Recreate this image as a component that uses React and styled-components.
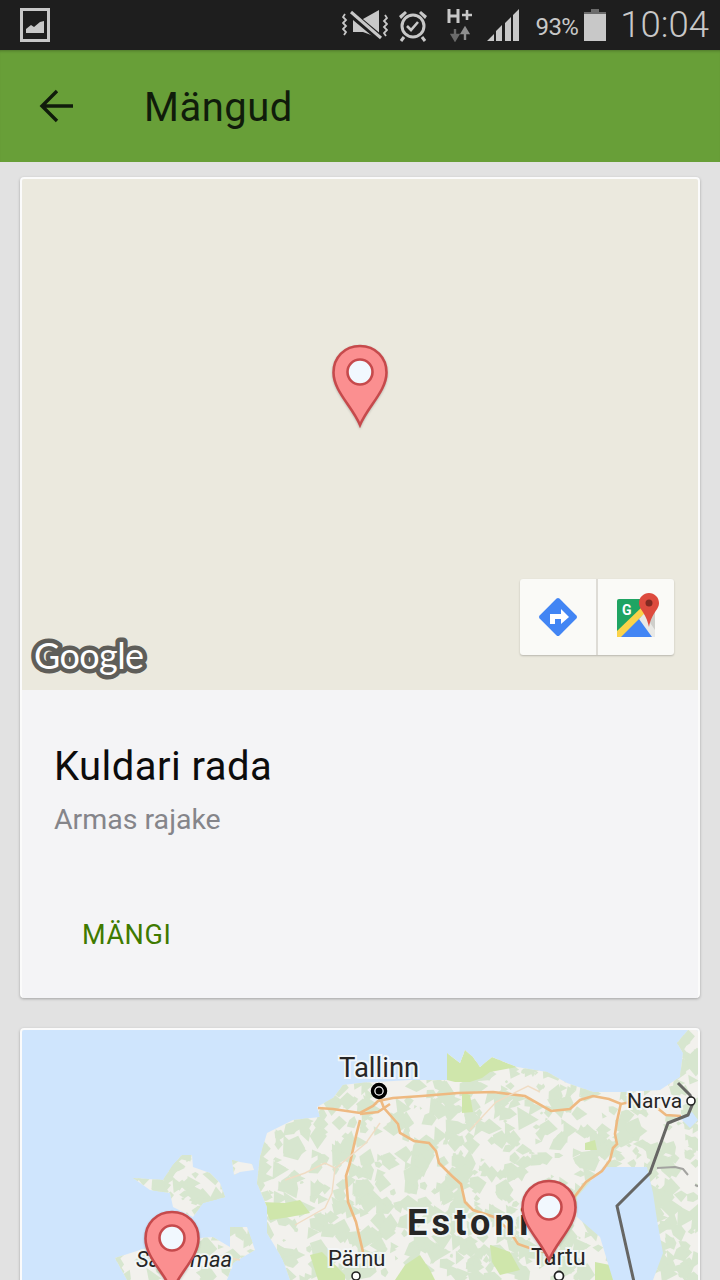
import styled, { createGlobalStyle } from "styled-components";
import { useMemo } from "react";

const GlobalStyle = createGlobalStyle`
  html, body {
    margin: 0;
    padding: 0;
    height: 1280px;
    overflow: hidden;
    background: #e2e2e2;
    font-family: Roboto, "Noto Sans", sans-serif;
  }
`;

const Page = styled.div`
  width: 720px;
  height: 1280px;
  overflow: hidden;
  background: #e2e2e2;
`;

const StatusBar = styled.div`
  height: 50px;
  background: #1e1e1e;
  display: flex;
  align-items: center;
  padding: 0 11px 0 20px;
  color: #c8c8c8;
`;

const StatusRight = styled.div`
  margin-left: auto;
  display: flex;
  align-items: center;
`;

const Spacer = styled.span`
  width: ${(p) => p.$w}px;
`;

const Battery = styled.span`
  font-size: 24px;
  letter-spacing: -0.6px;
  margin: 3px 6px 0 16px;
`;

const Clock = styled.span`
  font-size: 36.5px;
  font-weight: 300;
  margin-left: 14px;
  line-height: 50px;
`;

const Header = styled.header`
  height: 112px;
  background: #689f38;
  display: flex;
  align-items: center;
  padding-left: 38px;
  box-shadow: inset 0 3px 3px -2px rgba(0, 0, 0, 0.25);
`;

const Title = styled.h1`
  margin: 3px 0 0 68px;
  font-size: 40px;
  font-weight: 400;
  letter-spacing: 0.5px;
  color: #101c0b;
`;

const Feed = styled.main`
  display: flex;
  flex-direction: column;
  gap: 30px;
  padding: 15px 20px 0;
`;

const Card = styled.section`
  background: #f4f4f6;
  border: 2px solid #fbfbfb;
  border-bottom: 0;
  border-radius: 4px;
  box-shadow: 0 1px 3px rgba(0, 0, 0, 0.28);
  overflow: hidden;
  flex: none;
`;

const MapArea = styled.div`
  position: relative;
  height: 511px;
  background: ${(p) => p.$bg};
`;

const SecondMap = styled(MapArea)`
  height: 260px;
`;

const PinSpot = styled.svg`
  position: absolute;
  left: ${(p) => p.$x}px;
  top: ${(p) => p.$y}px;
  filter: drop-shadow(0 1px 1px rgba(0, 0, 0, 0.2));
`;

const MapButtons = styled.div`
  position: absolute;
  right: 24px;
  bottom: 35px;
  display: flex;
  height: 76px;
  background: #fafaf7;
  border-radius: 3px;
  box-shadow: 0 1px 2px rgba(0, 0, 0, 0.22);
`;

const MapButton = styled.div`
  width: 76px;
  display: flex;
  align-items: center;
  justify-content: center;
  & + & {
    width: 78px;
    padding-left: 6px;
    box-sizing: border-box;
    border-left: 2px solid #dedcd6;
  }
`;

const GoogleMark = styled.svg`
  position: absolute;
  left: 2px;
  bottom: 2px;
`;

const CardBody = styled.div`
  padding: 55px 0 37px 33px;
`;

const CardTitle = styled.h2`
  margin: 0 0 0 -1px;
  font-size: 40px;
  font-weight: 400;
  letter-spacing: 0.45px;
  line-height: 44px;
  color: #0c0c0c;
`;

const CardSub = styled.p`
  margin: 13px 0 0 -1px;
  font-size: 28.5px;
  line-height: 36px;
  color: #85858a;
`;

const PlayButton = styled.button`
  display: block;
  margin: 71px 0 0;
  padding: 0 0 0 27px;
  height: 52px;
  border: 0;
  background: none;
  font-family: inherit;
  font-size: 27px;
  letter-spacing: 0.6px;
  color: #3f7a00;
`;

const MapText = styled.text`
  font-family: Roboto, sans-serif;
  font-size: ${(p) => p.$size}px;
  font-weight: ${(p) => p.$weight || 400};
  font-style: ${(p) => (p.$italic ? "italic" : "normal")};
  letter-spacing: ${(p) => p.$spacing || 0}px;
  fill: #262626;
  stroke: rgba(245, 248, 250, 0.85);
  stroke-width: 4px;
  paint-order: stroke;
`;

const LogoText = styled.text`
  font-family: Lato, "Open Sans", sans-serif;
  font-size: 36px;
  font-weight: 400;
  letter-spacing: -0.6px;
  fill: #fff;
  stroke: #5f5e59;
  stroke-width: 9px;
  stroke-linejoin: round;
  paint-order: stroke;
`;

function Pin({ x, y }) {
  return (
    <PinSpot $x={x} $y={y} width="58" height="84" viewBox="0 0 58 84">
      <path
        d="M29 2C13.5 2 2.5 13.5 2.5 28.5 2.500 47 21 62 29 81 37 62 55.500 47 55.500 28.500 55.500 13.500 44.500 2 29 2Z"
        fill="#fb8f90"
        stroke="#c64a4c"
        strokeWidth="2.6"
      />
      <circle cx="29" cy="28" r="12.5" fill="#f1f8fe" stroke="#c64a4c" strokeWidth="2.6" />
    </PinSpot>
  );
}

function ImageNote() {
  return (
    <svg width="30" height="34" viewBox="0 0 30 34">
      <rect x="1.5" y="1.5" width="27" height="31" fill="none" stroke="#c8c8c8" strokeWidth="3" />
      <path d="M6 25v-4l5-4 3 2 6-5 4-1v12z" fill="#c8c8c8" />
    </svg>
  );
}

function VibrateMute() {
  return (
    <svg width="46" height="34" viewBox="0 0 46 34">
      <g fill="none" stroke="#c8c8c8" strokeWidth="1.8">
        <path d="M3 6l-2 3 3 3-3 3 3 3-3 3 3 3-2 3" />
        <path d="M43 7l2 3-3 3 3 3-3 3 3 3-3 3 2 3" />
      </g>
      <path d="M11 11h10l16-9v28L21 24H11z" fill="#c8c8c8" />
      <path d="M7 4l31 26" stroke="#1e1e1e" strokeWidth="7" />
      <path d="M9 4l30 26" stroke="#c8c8c8" strokeWidth="3" />
    </svg>
  );
}

function Alarm() {
  return (
    <svg width="30" height="34" viewBox="0 0 30 34">
      <circle cx="15" cy="18" r="11" fill="none" stroke="#c8c8c8" strokeWidth="3" />
      <path d="M9 18l4 4 7-8" fill="none" stroke="#c8c8c8" strokeWidth="2.6" />
      <path d="M1 8l6-5 2 2-6 6zM29 8l-6-5-2 2 6 6z" fill="#c8c8c8" />
      <path d="M6 29l-3 4M24 29l3 4" stroke="#c8c8c8" strokeWidth="3" />
    </svg>
  );
}

function NetworkType() {
  return (
    <svg width="26" height="34" viewBox="0 0 26 34">
      <path d="M2 1v14M11 1v14M2 8h9" stroke="#c8c8c8" strokeWidth="3" fill="none" />
      <path d="M15 7h10M20 2v10" stroke="#c8c8c8" strokeWidth="2.6" fill="none" />
      <path d="M8 21v9M5 27l3 5 3-5z" stroke="#6a6a6a" strokeWidth="2.4" fill="#6a6a6a" />
      <path d="M18 32v-10M15 25l3-5 3 5z" stroke="#8f8f8f" strokeWidth="2.4" fill="#8f8f8f" />
    </svg>
  );
}

function Signal() {
  return (
    <svg width="34" height="34" viewBox="0 0 34 34">
      <path d="M1 33l7-7v7zM10 33V23l6-6v16zM19 33V15l6-6v24zM27 33V7l6-6v32z" fill="#c8c8c8" />
    </svg>
  );
}

function BatteryIcon() {
  return (
    <svg width="22" height="32" viewBox="0 0 22 32">
      <path d="M7 0h8v3H7z" fill="#6b6b6b" />
      <path d="M0 3h22v2H0z" fill="#6b6b6b" />
      <path d="M0 5h22v27H0z" fill="#c8c8c8" />
    </svg>
  );
}

function BackArrow() {
  return (
    <svg width="38" height="38" viewBox="0 0 38 38">
      <path d="M35 19H5M19 4L4 19l15 15" fill="none" stroke="#101c0b" strokeWidth="3.4" />
    </svg>
  );
}

function Directions() {
  return (
    <svg width="42" height="42" viewBox="0 0 42 42">
      <rect x="7" y="7" width="28" height="28" rx="2" fill="#4285f4" transform="rotate(45 21 21)" />
      <path d="M13 28v-10h11v-5l8 8-8 7v-5h-6v5z" fill="#fff" />
    </svg>
  );
}

function MapsLogo() {
  return (
    <svg width="44" height="48" viewBox="0 0 44 48">
      <rect x="0" y="6" width="38" height="38" rx="2" fill="#1fa463" />
      <path d="M0 44L24 23 38 44z" fill="#4285f4" />
      <path d="M24 23l14-12v33z" fill="#cfcfcb" />
      <path d="M0 38L26 13l5 4L4 44H0z" fill="#fbd34a" />
      <path d="M22 26l5-5 11 16v7h-3z" fill="#e9e9e6" />
      <text x="5" y="22" fontFamily="Roboto, sans-serif" fontSize="14" fontWeight="700" fill="#fff">
        G
      </text>
      <path
        d="M32 0c-5.500 0-10 4.400-10 10 0 7 7 9 10 24 3-15 10-17 10-24 0-5.600-4.500-10-10-10z"
        fill="#dd4b3e"
      />
      <circle cx="32" cy="10" r="3.500" fill="#812a22" />
    </svg>
  );
}

// seeded so the forest speckle stays the same between runs
function makePatches(count) {
  let seed = 7;
  const rnd = () => {
    seed = (seed * 16807) % 2147483647;
    return seed / 2147483647;
  };
  const list = [];
  for (let i = 0; i < count; i++) {
    const x = 110 + rnd() * 590;
    const y = 1035 + rnd() * 245;
    const r = 2 + rnd() * 10;
    const pts = [];
    const n = 3 + Math.floor(rnd() * 3);
    for (let k = 0; k < n; k++) {
      const a = (k / n) * Math.PI * 2;
      const d = r * (0.5 + rnd() * 0.8);
      pts.push(`${(x + Math.cos(a) * d).toFixed(1)},${(y + Math.sin(a) * d).toFixed(1)}`);
    }
    list.push(pts.join(" "));
  }
  return list;
}

const MAINLAND =
  "317,1107 333,1098 343,1085 360,1083 410,1080 447,1080 447,1053 460,1063 465,1050 473,1057 480,1067 492,1057 517,1067 547,1072 567,1083 593,1092 627,1092 660,1090 680,1077 683,1053 677,1043 688,1030 700,1030 700,1280 290,1280 283,1260 267,1233 267,1207 257,1183 260,1157 267,1133 293,1120 320,1117";
const HIIUMAA =
  "133,1178 163,1180 173,1165 182,1155 192,1155 193,1167 210,1173 220,1183 225,1197 203,1203 193,1217 173,1207 170,1193 150,1190";
const SAAREMAA =
  "115,1258 140,1250 173,1240 213,1237 230,1247 230,1227 247,1227 255,1250 233,1263 227,1280 127,1280";
const VORMSI = "232,1160 240,1162 252,1164 254,1170 240,1172 234,1175";
const PEIPSI =
  "603,1167 647,1167 653,1193 657,1220 663,1253 653,1280 613,1280 600,1237 577,1217 577,1197";
const GREENS = [
  "447,1080 447,1053 460,1063 465,1050 473,1057 480,1067 492,1057 517,1067 490,1072 482,1078 470,1082 455,1082",
  "262,1202 285,1203 300,1200 310,1213 290,1217 270,1220",
  "462,1092 470,1095 473,1112 462,1113",
  "585,1143 595,1140 597,1150 585,1150",
  "310,1255 322,1252 345,1275 345,1280 318,1280",
  "490,1245 510,1252 520,1270 500,1275 492,1262",
  "420,1255 430,1270 435,1280 395,1280 405,1265",
  "595,1262 610,1265 625,1280 595,1280",
];

function EstoniaMap() {
  const patches = useMemo(() => makePatches(1300), []);
  return (
    <svg width="680" height="260" viewBox="22 1030 680 260">
      <defs>
        <clipPath id="land">
          <polygon points={MAINLAND} />
          <polygon points={HIIUMAA} />
          <polygon points={SAAREMAA} />
          <polygon points={VORMSI} />
        </clipPath>
      </defs>
      <g fill="#f2f1ed">
        <polygon points={MAINLAND} />
        <polygon points={HIIUMAA} />
        <polygon points={SAAREMAA} />
        <polygon points={VORMSI} />
      </g>
      <g clipPath="url(#land)">
        {patches.map((p, i) => (
          <polygon key={i} points={p} fill="#d7e6cf" />
        ))}
        {GREENS.map((p, i) => (
          <polygon key={i} points={p} fill="#cfe6ab" />
        ))}
      </g>
      <polygon points={PEIPSI} fill="#cfe5fd" />
      <polygon points="680,1118 692,1112 698,1120 690,1128" fill="#cfe5fd" />
      <g fill="none" stroke="#eeb981" strokeWidth="2.6">
        <path d="M318 1108l15 1 27 4 13-7 5-5 15-3 29-2 36-3 35-1 32 4 26 15 19-2 10-9 13-4 16 3 12 5 15-3 15 2 15 12 15 1" />
        <path d="M621 1103l-4 18-2 13 2 10-4 4-3 12-8 11-16 11-14 18-2 14" />
        <path d="M378 1093l6 15 14 16 2 9 14 8 15 2 7 8 3 12 13 13 9 8 4 18 8 8 21 7 15 13 9 14 20 7 10 1" />
        <path d="M360 1120l-4 16-6 27-4 13 2 26 8 20 7 30" />
        <path d="M360 1114l18-2 12-8" />
      </g>
      <g fill="none" stroke="#f0dcc4" strokeWidth="1.4">
        <path d="M285 1180l20-7 20-10 10 5-3 25-7 15-30 17" />
        <path d="M336 1168l30-25 14-20" />
        <path d="M470 1130l26-28 32-16 12 6" />
        <path d="M240 1260l-20-4-15 4" />
      </g>
      <g fill="none" stroke="#666664" strokeWidth="3">
        <path d="M678 1083l12 12 3 8-5 12-20 8-18 50-33 33 17 76" />
      </g>
      <path d="M657 1168l18-1 8 2 5 6M695 1185l5 2" fill="none" stroke="#a3a3a0" strokeWidth="2" />
      <circle cx="379" cy="1091" r="6.500" fill="#fff" stroke="#000" strokeWidth="3.500" />
      <circle cx="379" cy="1091" r="3.500" fill="#000" />
      <circle cx="691" cy="1101" r="4" fill="#fff" stroke="#222" strokeWidth="1.600" />
      <circle cx="356" cy="1276" r="4" fill="#fff" stroke="#222" strokeWidth="1.600" />
      <circle cx="559" cy="1276" r="4.500" fill="#fff" stroke="#222" strokeWidth="1.800" />
      <MapText x="339" y="1077" $size={27.5}>Tallinn</MapText>
      <MapText x="627" y="1108" $size={21}>Narva</MapText>
      <MapText x="328" y="1266" $size={22}>Pärnu</MapText>
      <MapText x="531" y="1265" $size={23.500}>Tartu</MapText>
      <MapText x="136" y="1267" $size={22} $italic>Saaremaa</MapText>
      <MapText x="407" y="1235" $size={36} $weight={700} $spacing={4.2}>Estonia</MapText>
    </svg>
  );
}

export default function App() {
  return (
    <Page>
      <GlobalStyle />
      <StatusBar>
        <ImageNote />
        <StatusRight>
          <VibrateMute />
          <Spacer $w={10} />
          <Alarm />
          <Spacer $w={19} />
          <NetworkType />
          <Spacer $w={13} />
          <Signal />
          <Battery>93%</Battery>
          <BatteryIcon />
          <Clock>10:04</Clock>
        </StatusRight>
      </StatusBar>
      <Header>
        <BackArrow />
        <Title>Mängud</Title>
      </Header>
      <Feed>
        <Card>
          <MapArea $bg="#ebe9de">
            <Pin x={309} y={165} />
            <MapButtons>
              <MapButton>
                <Directions />
              </MapButton>
              <MapButton>
                <MapsLogo />
              </MapButton>
            </MapButtons>
            <GoogleMark width="140" height="56" viewBox="0 0 140 56">
              <LogoText x="10" y="37">Google</LogoText>
            </GoogleMark>
          </MapArea>
          <CardBody>
            <CardTitle>Kuldari rada</CardTitle>
            <CardSub>Armas rajake</CardSub>
            <PlayButton>MÄNGI</PlayButton>
          </CardBody>
        </Card>
        <Card>
          <SecondMap $bg="#cfe5fd">
            <EstoniaMap />
            <Pin x={498} y={149} />
            <Pin x={121} y={180} />
          </SecondMap>
        </Card>
      </Feed>
    </Page>
  );
}
